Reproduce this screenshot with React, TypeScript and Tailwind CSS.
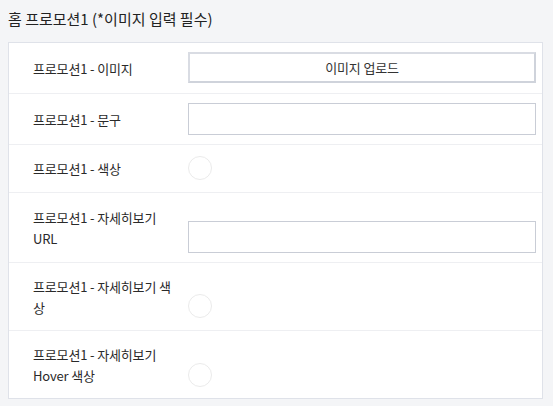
import React from "react";

const font = { fontFamily: '"Noto Sans CJK KR", "Noto Sans", sans-serif' };

function Circle() {
  return <div className="w-6 h-6 rounded-full border border-[#ebebeb] bg-white" />;
}

function Input() {
  return <div className="w-full h-[32px] border border-[#c9cdd6] bg-white" />;
}

export default function App() {
  return (
    <div className="w-[553px] h-[406px] bg-[#f4f5f7] pt-[8px] text-[#222]" style={font}>
      <div className="pl-2 h-[34px] text-[15px] leading-[22px] text-[#222]">
        홈 프로모션1 (*이미지 입력 필수)
      </div>
      <div className="ml-2 w-[535px] border border-[#dfe2e9] bg-white text-[13px] leading-[21px] tracking-[-0.15px] text-[#2a2a2a]">
        <div className="flex h-[51px] border-b border-[#eeeff2]">
          <div className="w-[179px] pl-6 flex items-center">프로모션1 - 이미지</div>
          <div className="flex-1 pr-[6px] pt-[9px]">
            <div className="w-full h-[31px] border-2 border-[#cfd3db] border-t-[#d9dce3] border-l-[#d9dce3] bg-white flex items-center justify-center text-[13px] text-[#333]">
              이미지 업로드
            </div>
          </div>
        </div>
        <div className="flex h-[51px] border-b border-[#eeeff2]">
          <div className="w-[179px] pl-6 flex items-center">프로모션1 - 문구</div>
          <div className="flex-1 pr-[6px] pt-[9px]">
            <Input />
          </div>
        </div>
        <div className="flex h-[48px] border-b border-[#eeeff2]">
          <div className="w-[179px] pl-6 flex items-center">프로모션1 - 색상</div>
          <div className="flex-1 pt-[11px]">
            <Circle />
          </div>
        </div>
        <div className="flex h-[70px] border-b border-[#eeeff2]">
          <div className="w-[179px] pl-6 flex items-center">
            <div>
              프로모션1 - 자세히보기
              <br />
              URL
            </div>
          </div>
          <div className="flex-1 pr-[6px] pt-[28px]">
            <Input />
          </div>
        </div>
        <div className="flex h-[68px] border-b border-[#eeeff2]">
          <div className="w-[179px] pl-6 flex items-center">
            <div>
              프로모션1 - 자세히보기 색
              <br />상
            </div>
          </div>
          <div className="flex-1 pt-[31px]">
            <Circle />
          </div>
        </div>
        <div className="flex h-[67px]">
          <div className="w-[179px] pl-6 flex items-center">
            <div>
              프로모션1 - 자세히보기
              <br />
              Hover 색상
            </div>
          </div>
          <div className="flex-1 pt-[32px]">
            <Circle />
          </div>
        </div>
      </div>
    </div>
  );
}
